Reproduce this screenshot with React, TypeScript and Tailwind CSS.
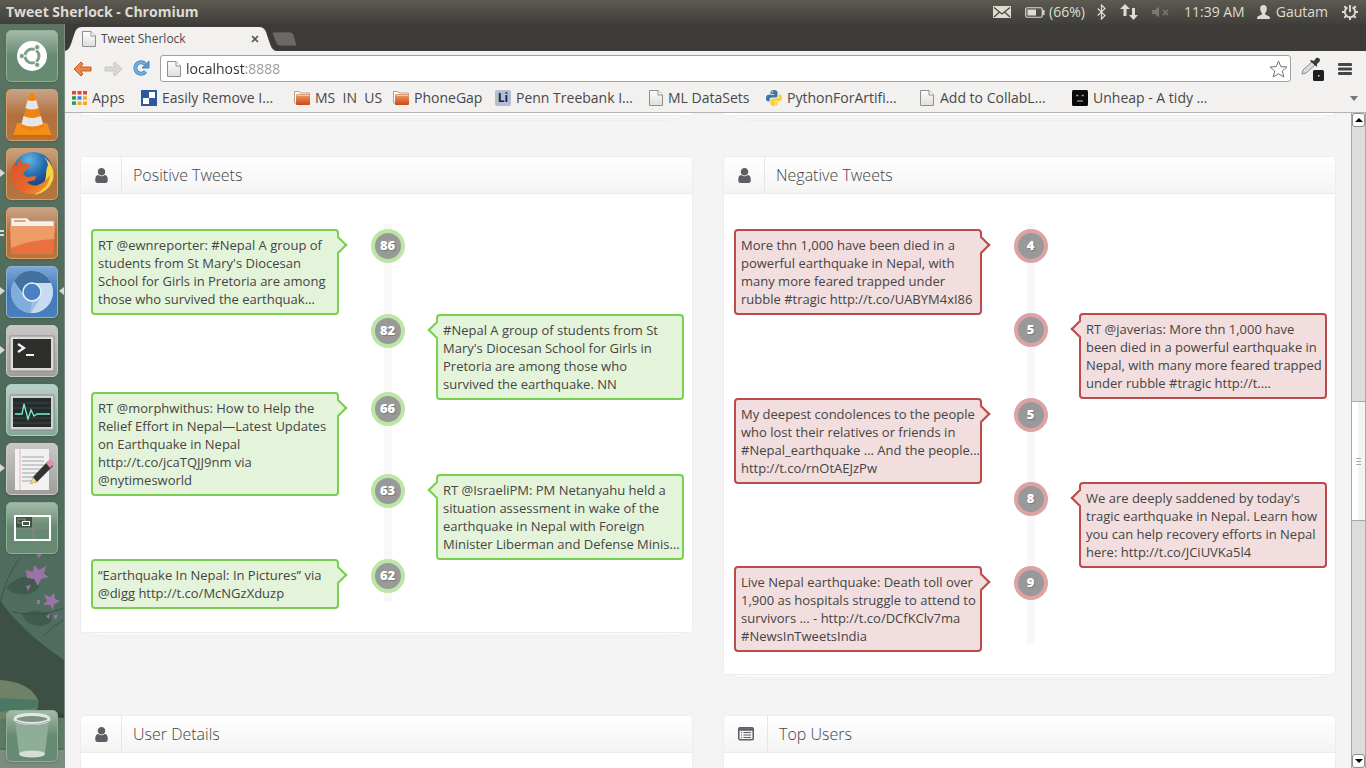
import type { ReactNode } from "react";

const UI = "font-['Open_Sans','Noto_Sans',sans-serif]";

/* ---------- small drawings ---------- */

function PageIcon({ className = "" }: { className?: string }) {
  return (
    <svg className={className} width="14" height="16" viewBox="0 0 14 16">
      <defs>
        <linearGradient id="sheet" x1="0" y1="0" x2="0" y2="1">
          <stop offset="0" stopColor="#fdfdfd" />
          <stop offset="1" stopColor="#dededc" />
        </linearGradient>
      </defs>
      <path d="M.5.5H9L13.500 5V15.500H.5Z" fill="url(#sheet)" stroke="#8f8f8d" />
      <path d="M9 .5V5H13.500" fill="#fff" stroke="#8f8f8d" />
    </svg>
  );
}

function FolderIcon() {
  return (
    <svg width="16" height="16" viewBox="0 0 16 16">
      <defs>
        <linearGradient id="fold" x1="0" y1="0" x2="0" y2="1">
          <stop offset="0" stopColor="#eda06a" />
          <stop offset="1" stopColor="#cf4518" />
        </linearGradient>
      </defs>
      <path d="M.5 13V1.500H5L6 3H15.500V13Z" fill="#fff" stroke="#a8a29c" />
      <rect x="2" y="4" width="14" height="11" rx="1" fill="url(#fold)" />
      <path d="M3 5.500H15" stroke="#f8c7a0" />
    </svg>
  );
}

function UserIcon() {
  return (
    <svg width="13" height="15" viewBox="0 128 1280 1536" fill="#5d5d63">
      <path d="M1280 1399q0 109-62.500 187t-150.500 78h-854q-88 0-150.500-78t-62.500-187q0-85 8.500-160.500t31.500-152 58.500-131 94-89 134.500-34.500q131 128 313 128t313-128q76 0 134.500 34.500t94 89 58.500 131 31.500 152 8.500 160.500zm-256-887q0 159-112.500 271.500t-271.500 112.500-271.500-112.500-112.500-271.500 112.500-271.500 271.500-112.500 271.500 112.500 112.500 271.500z" />
    </svg>
  );
}

function ListIcon() {
  return (
    <svg width="16" height="14" viewBox="0 0 16 14">
      <rect x=".75" y=".75" width="14.500" height="12" rx="1.200" fill="#f4f4f5" stroke="#5d5d63" strokeWidth="1.500" />
      <path d="M1 2.500H15" stroke="#5d5d63" strokeWidth="2.500" />
      <path d="M3 5.500h1M5.500 5.500H13M3 8h1M5.500 8H13M3 10.500h1M5.500 10.500H13" stroke="#5d5d63" strokeWidth="1.200" />
    </svg>
  );
}

/* ---------- desktop menu bar ---------- */

function MenuBar() {
  return (
    <header className={`flex h-6 shrink-0 items-center bg-linear-to-b from-[#5c5a51] to-[#403f3a] pr-2 pl-1.5 text-sm text-[#dfdbd2] ${UI}`}>
      <h1 className="font-bold">Tweet Sherlock - Chromium</h1>
      <div className="ml-auto flex items-center">
        <svg width="18" height="12" viewBox="0 0 18 12" aria-label="Mail">
          <rect width="18" height="12" fill="#dfdbd2" />
          <path d="M1 1.500 9 8 17 1.500M1 11 6.500 6M17 11 11.500 6" fill="none" stroke="#4a4841" strokeWidth="1.300" />
        </svg>
        <svg className="ml-3.5" width="20" height="11" viewBox="0 0 20 11">
          <rect x=".75" y=".75" width="16.500" height="9.500" rx="1.500" fill="none" stroke="#dfdbd2" strokeWidth="1.200" />
          <rect x="2.500" y="2.500" width="8.500" height="6" fill="#dfdbd2" />
          <path d="M18.800 3v5" stroke="#dfdbd2" strokeWidth="1.500" />
        </svg>
        <span className="ml-1">(66%)</span>
        <svg className="ml-3" width="9" height="16" viewBox="0 0 9 16" fill="none" stroke="#dfdbd2" strokeWidth="1.200">
          <path d="M.7 4.500 8 11.500 4.500 15V1L8 4.500.7 11.500" />
        </svg>
        <svg className="ml-3.5" width="18" height="16" viewBox="0 0 18 16" fill="#dfdbd2">
          <path d="M5 0 10 5H6.500V12H3.500V5H0ZM12 4h3v7h3l-4.500 5L9 11h3Z" />
        </svg>
        <svg className="ml-3.5" width="18" height="12" viewBox="0 0 18 12">
          <path d="M0 4H3L7 .5V11.500L3 8H0Z" fill="#7b796f" />
          <path d="M11 4 16 9M16 4 11 9" stroke="#7b796f" strokeWidth="1.600" />
        </svg>
        <time className="ml-3.5">11:39 AM</time>
        <svg className="ml-3" width="13" height="14" viewBox="0 0 13 14" fill="#dfdbd2">
          <path d="M6.500 0C9 0 10 1.700 9.800 4 9.600 6 9 7 8.200 8v1.500L12 11.200Q13 11.800 13 14H0Q0 11.800 1 11.200L4.800 9.500V8C4 7 3.400 6 3.200 4 3 1.700 4 0 6.500 0Z" />
        </svg>
        <span className="ml-1.5">Gautam</span>
        <svg className="ml-3.5" width="16" height="16" viewBox="0 0 16 16" fill="none" stroke="#dfdbd2">
          <path d="M5.500 3.400a5.200 5.200 0 1 0 5 0" strokeWidth="1.900" />
          <path d="M8 1V8" strokeWidth="1.900" />
          <path d="M2.300 2.300 4 4M13.700 2.300 12 4M0 8H3M13 8H16M2.300 13.700 4 12M13.700 13.700 12 12M8 13v3" strokeWidth="2" />
        </svg>
      </div>
    </header>
  );
}

/* ---------- launcher ---------- */

function Tile({ label, tone, running = 0, focused = false, children }: { label: string; tone: string; running?: number; focused?: boolean; children: ReactNode }) {
  return (
    <button aria-label={label} className={`relative ml-1.5 size-[52px] shrink-0 rounded-[5px] border shadow-sm ${tone}`}>
      <svg className="size-full" viewBox="0 0 50 50">
        {children}
      </svg>
      {running === 1 && <span className="absolute top-5 -left-[7px] border-y-4 border-l-5 border-y-transparent border-l-[#d5d8d5]" />}
      {running === 2 && <span className="absolute top-[22px] -left-[7px] h-[6px] w-1 border-y-2 border-[#d5d8d5]" />}
      {focused && <span className="absolute top-5 -right-[7px] border-y-4 border-r-5 border-y-transparent border-r-[#d5d8d5]" />}
    </button>
  );
}

const ORANGE = "border-[#dd9c65] bg-linear-to-b from-[#c9a386] via-[#b1713c] to-[#b7743f]";
const GREY = "border-[#c9c9c7] bg-linear-to-b from-[#c9c8c7] to-[#a09e9c]";
const GREEN = "border-[#8db096] bg-linear-to-b from-[#a4baa9] via-[#668a71] to-[#668971]";

function Launcher() {
  return (
    <nav aria-label="Launcher" className="relative flex w-[65px] shrink-0 flex-col gap-[7px] overflow-hidden border-r border-[#7c8b7e] bg-linear-to-b from-[#5c7461] via-[#4f6a5b] to-[#4f7062] pt-1.5 pb-1.5">
      <svg className="absolute bottom-0 left-0" width="64" height="220" viewBox="0 0 64 220">
        <path d="M0 52Q20 82 64 112V178H0Z" fill="#3d5045" />
        <path d="M0 132Q30 134 38 152 40 164 28 168L0 172Z" fill="#6f8267" />
        <path d="M0 150 37 152 38 160 0 164Z" fill="#4d7765" />
        <path d="M0 172 34 164 64 168V200H0Z" fill="#5d7a66" />
        <path d="M36 162 64 166V170L40 168Z" fill="#34443a" />
        <path d="M6 40Q20 24 38 30 44 40 30 46 14 48 6 40ZM22 66Q34 60 50 66 56 74 42 78 26 78 22 66Z" fill="#405a4c" />
        <path d="M0 55Q6 28 20 10M64 60Q40 70 12 64M44 88Q52 78 64 72" fill="none" stroke="#3c5347" strokeWidth="1" />
        <path d="M26 22 33 24 34 17 39 22 46 18 44 26 49 29 41 31 38 38 34 31 27 30ZM26 38l5-1-3 6ZM44 46l6 3 4-4 1 6 5 2-6 3-1 6-3-5-7 0 4-4ZM37 52h3v4h-3ZM46 68l4-2-1 5Zm7 0 5-2-2 6ZM36 6l6 0-3 4Z" fill="#9a72a6" />
        <path d="M0 202H64V220H0Z" fill="#7c8c80" />
      </svg>
      <Tile label="Dash home" tone={GREEN}>
        <circle cx="25" cy="25" r="15" fill="#fff" />
        <circle cx="25" cy="25" r="7" fill="none" stroke="#7f9f88" strokeWidth="3" />
        <path d="M25 25 34 25M25 25 20 16.500M25 25 20 33.500" stroke="#fff" strokeWidth="1.300" transform="rotate(60 25 25)" />
        <circle cx="14.800" cy="25" r="2.600" fill="#7f9f88" stroke="#fff" strokeWidth=".8" />
        <circle cx="30.200" cy="16.200" r="2.600" fill="#7f9f88" stroke="#fff" strokeWidth=".8" />
        <circle cx="30.200" cy="33.800" r="2.600" fill="#7f9f88" stroke="#fff" strokeWidth=".8" />
      </Tile>
      <Tile label="VLC media player" tone={ORANGE}>
        <path d="M10 33H40L45 46H6Z" fill="#f58d1b" />
        <path d="M6 45H45V47H6Z" fill="#c96b0c" />
        <path d="M22.500 4Q25 2 27.500 4L37 37Q25 44 14 37Z" fill="#f28313" />
        <path d="M20.800 10Q25 12 29.200 10L31.500 18Q25 21 18.400 18ZM16.500 26Q25 30 33.800 26L36 34Q25 39 14.500 34Z" fill="#e4e6e8" />
      </Tile>
      <Tile label="Firefox" tone={ORANGE} running={1}>
        <defs>
          <radialGradient id="globe" cx=".4" cy=".2" r=".8">
            <stop offset="0" stopColor="#63b5e0" />
            <stop offset=".5" stopColor="#256aae" />
            <stop offset="1" stopColor="#10305f" />
          </radialGradient>
          <linearGradient id="fox" x1="0" y1="0" x2="1" y2="1">
            <stop offset="0" stopColor="#d9542a" />
            <stop offset=".6" stopColor="#e8662b" />
            <stop offset="1" stopColor="#f4a52e" />
          </linearGradient>
        </defs>
        <circle cx="26" cy="23" r="20" fill="url(#globe)" />
        <path d="M37 8Q49 17 46 31 41 44 27 46 38 38 39 27 39 20 41 16Q40 11 37 8Z" fill="#f7d443" />
        <path d="M43 26Q42 36 35 41 28 47 18 44 6 40 4 28 3 19 7 14L9 17Q11 13 14 10V14L21 15 24 18 19 20 16 25 20 28 29 27 28 31 20 33Q26 39 33 35 38 33 43 26Z" fill="url(#fox)" />
      </Tile>
      <Tile label="Files" tone={ORANGE} running={2}>
        <path d="M4 22V10H20L23 13H47V22Z" fill="#f4f2ef" stroke="#b8a595" strokeWidth=".7" />
        <path d="M7 12H18L19 14H7Z" fill="#e9a06f" />
        <path d="M3 18H48L46 46H4Z" fill="#e8713f" />
        <path d="M3 18H48L47 31Q22 32 4 40Z" fill="#ee9c68" />
      </Tile>
      <Tile label="Chromium" tone="border-[#8bb4dc] bg-linear-to-b from-[#7ca7d6] via-[#4279b8] to-[#4a80bc]" running={1} focused>
        <circle cx="25" cy="25" r="21" fill="#9bbfe5" />
        <path d="M25 25H46A21 21 0 0 1 24 46L34 30Z" fill="#c7dcf1" />
        <path d="M25 16H44A21 21 0 0 1 46 25H30Z" fill="#c7dcf1" />
        <path d="M7 14A21 21 0 0 1 44 16H25L16 27Z" fill="#43709f" />
        <path d="M7 14 16 30 25 35 23 46A21 21 0 0 1 7 14Z" fill="#80addb" />
        <circle cx="25" cy="25" r="9" fill="#4a80c3" stroke="#e9f1fa" strokeWidth="1.500" />
      </Tile>
      <Tile label="Terminal" tone={GREY} running={1}>
        <rect x="3" y="10" width="44" height="35" rx="1" fill="#dcdbd9" stroke="#8d8c8a" />
        <rect x="6" y="13" width="38" height="29" fill="#2e2e2d" />
        <path d="M11 18 17 22 11 26M19 29H27" fill="none" stroke="#f4f4f4" strokeWidth="2.200" />
      </Tile>
      <Tile label="System Monitor" tone="border-[#a9cfc2] bg-linear-to-b from-[#b9d0c8] to-[#84a89a]">
        <rect x="3" y="10" width="44" height="35" rx="1" fill="#cfd4d1" stroke="#7f8a86" />
        <rect x="6" y="13" width="38" height="29" fill="#252b2b" />
        <path d="M6 18H44M6 23H44M6 33H44M6 38H44" stroke="#3d4646" />
        <path d="M8 29H15L17 19 21 34 24 25 27 31 30 29H43" fill="none" stroke="#7bf0cf" strokeWidth="1.300" />
      </Tile>
      <Tile label="Text Editor" tone={GREY} running={1}>
        <rect x="8" y="5" width="34" height="41" fill="#f1f1f2" />
        <path d="M13 5V46" stroke="#efb0b0" />
        <path d="M15 13H37M15 17H37M15 21H37M15 25H36M15 29H33M15 33H30M15 37H27" stroke="#a3a3a5" />
        <path d="M23 40 26 33 41 17 46 22 30 38Z" fill="#333" />
        <path d="M23 40 26 33 30 38Z" fill="#ecd983" />
        <path d="M39 19 43 15 47 19 43 24Z" fill="#e28fb4" />
      </Tile>
      <Tile label="Workspace Switcher" tone={GREEN}>
        <rect x="7" y="13" width="18" height="12" fill="#3f5145" />
        <path d="M26 13V37M8 25H43" stroke="#94808f" />
        <rect x="11" y="16" width="7" height="4" fill="none" stroke="#8a938c" />
        <rect x="15.500" y="18.500" width="7" height="4" fill="#45584a" stroke="#fff" />
        <rect x="8" y="13" width="35" height="24" fill="none" stroke="#fff" strokeWidth="2" />
      </Tile>
      <div className="mt-auto flex">
        <Tile label="Trash" tone={GREEN}>
          <path d="M8 8H42L38 43Q25 49 12 43Z" fill="#8fae99" />
          <ellipse cx="25" cy="43" rx="13" ry="3.500" fill="#d7dcd8" />
          <ellipse cx="25" cy="8" rx="17" ry="4.500" fill="#7b9383" stroke="#e6e8e6" strokeWidth="3" />
          <path d="M8 10Q25 17 42 10" fill="none" stroke="#a9aeaa" />
        </Tile>
      </div>
    </nav>
  );
}

/* ---------- browser chrome ---------- */

function TabStrip() {
  return (
    <div className="flex h-[27px] shrink-0 items-end bg-[#3c3b37]">
      <div className="relative flex h-6 w-[211px] items-center text-xs text-[#4a4a4a]">
        <svg className="absolute inset-0 size-full" viewBox="0 0 211 24" preserveAspectRatio="none">
          <path d="M0 24Q4 23 6 17L10 5Q12 0 17 0H194Q199 0 201 5L205 17Q207 23 211 24Z" fill="#f2f1f0" />
        </svg>
        <PageIcon className="relative ml-[17px]" />
        <span className="relative ml-[5px]">Tweet Sherlock</span>
        <button aria-label="Close tab" className="relative mr-[17px] ml-auto">
          <svg width="8" height="8" viewBox="0 0 8 8">
            <path d="M1 1 7 7M7 1 1 7" stroke="#555" strokeWidth="1.600" />
          </svg>
        </button>
      </div>
      <button aria-label="New tab" className="mb-[5px] -ml-1">
        <svg width="26" height="14" viewBox="0 0 26 14">
          <path d="M2 0H18Q21 0 22 3L25 14H8Q5 14 4 11L0 1Z" fill="#6a6965" stroke="#33322f" strokeWidth=".6" />
        </svg>
      </button>
    </div>
  );
}

function Toolbar() {
  return (
    <div className="flex h-[35px] shrink-0 items-center bg-[#f2f1f0] pr-3.5 pl-2">
      <button aria-label="Back">
        <svg width="20" height="16" viewBox="0 0 20 16">
          <path d="M1 8 8 1 10 3 7.500 6H18V10H7.500L10 13 8 15Z" fill="#ea8647" stroke="#c65f22" strokeLinejoin="round" />
        </svg>
      </button>
      <button aria-label="Forward" className="ml-2.5">
        <svg width="20" height="16" viewBox="0 0 20 16">
          <path d="M19 8 12 1 10 3 12.500 6H2V10H12.500L10 13 12 15Z" fill="#d9d8d6" stroke="#c9c8c6" strokeLinejoin="round" />
        </svg>
      </button>
      <button aria-label="Reload" className="ml-2.5">
        <svg width="17" height="17" viewBox="0 0 17 17">
          <path d="M12.500 11.500A5.700 5.700 0 1 1 12 4" fill="none" stroke="#4585c4" strokeWidth="4" />
          <path d="M12.500 11.500A5.700 5.700 0 1 1 12 4" fill="none" stroke="#77abdf" strokeWidth="2.400" />
          <path d="M16 1V8H9Z" fill="#5f99d3" stroke="#4585c4" strokeLinejoin="round" />
        </svg>
      </button>
      <div className="ml-2.5 flex h-[27px] flex-1 items-center rounded-[3px] border border-[#a3a19d] bg-white pr-0.5 pl-[6px]">
        <PageIcon className="shrink-0" />
        <input
          aria-label="Address"
          defaultValue="localhost:8888"
          className="ml-[5px] min-w-0 flex-1 bg-linear-to-r from-[#2f2f2f] from-[60px] to-[#959595] to-[60px] bg-clip-text text-sm text-transparent caret-black outline-none"
        />
        <button aria-label="Bookmark this page">
          <svg width="19" height="18" viewBox="0 0 19 18">
            <path d="M9.500 1 11.800 6.600 18 7 13.300 11 14.800 17 9.500 13.800 4.200 17 5.700 11 1 7 7.200 6.600Z" fill="#fff" stroke="#74726e" strokeLinejoin="round" />
          </svg>
        </button>
      </div>
      <button aria-label="Color picker" className="ml-2.5">
        <svg width="23" height="24" viewBox="0 0 23 24">
          <path d="M1 17 2 13 11 5 14 8 5 16Z" fill="#dcdcdc" stroke="#8a8a8a" />
          <path d="M10 3 13 4 15 1Q19 0 19 4L16 7 16 10 9 4Z" fill="#3a3b3d" />
          <rect x="12" y="13" width="11" height="11" rx="1.500" fill="#1e1f21" />
          <rect x="17" y="18" width="1.500" height="1.500" fill="#ddd" />
        </svg>
      </button>
      <button aria-label="Menu" className="ml-3.5">
        <svg width="14" height="14" viewBox="0 0 14 14">
          <path d="M1 2.500H13M1 7H13M1 11.500H13" stroke="#454545" strokeWidth="2.800" strokeLinecap="round" />
        </svg>
      </button>
    </div>
  );
}

function Bookmark({ width, icon, children }: { width: string; icon: ReactNode; children: ReactNode }) {
  return (
    <a href="#bookmark" className={`flex shrink-0 items-center gap-[5px] whitespace-nowrap ${width}`}>
      {icon}
      <span>{children}</span>
    </a>
  );
}

function BookmarkBar() {
  return (
    <nav aria-label="Bookmarks" className="flex h-[27px] shrink-0 items-center border-b border-[#b5b3b0] bg-[#f2f1f0] pr-2 pb-0.5 pl-[7px] text-sm text-[#484848]">
      <Bookmark
        width="w-[69px]"
        icon={
          <svg width="15" height="14" viewBox="0 0 15 14">
            <path d="M0 0h4v3.500H0zM5.500 0h4v3.500h-4zM11 0h4v3.500h-4z" fill="#ea4335" />
            <path d="M0 5.200h4v3.500H0z" fill="#2c9b51" />
            <path d="M5.500 5.200h4v3.500h-4z" fill="#3a7fe8" />
            <path d="M11 5.200h4v3.500h-4zM5.500 10.400h4v3.500h-4zM11 10.400h4v3.500h-4z" fill="#f2ab1b" />
            <path d="M0 10.400h4v3.500H0z" fill="#2c9b51" />
          </svg>
        }
      >
        Apps
      </Bookmark>
      <Bookmark
        width="w-[153px]"
        icon={
          <svg width="16" height="16" viewBox="0 0 16 16">
            <rect width="16" height="16" fill="#2f56a0" />
            <path d="M8 2H14V8H8ZM2 8H8V14H2Z" fill="#fff" />
          </svg>
        }
      >
        Easily Remove I…
      </Bookmark>
      <Bookmark width="w-[99px]" icon={<FolderIcon />}>
        MS&nbsp; IN&nbsp; US
      </Bookmark>
      <Bookmark width="w-[102px]" icon={<FolderIcon />}>
        PhoneGap
      </Bookmark>
      <Bookmark width="w-[154px]" icon={<span className="flex size-4 items-center justify-center rounded-xs bg-[#b3bdd4] text-xs font-bold text-[#1e2433]">Li</span>}>
        Penn Treebank I…
      </Bookmark>
      <Bookmark width="w-[117px]" icon={<PageIcon />}>
        ML DataSets
      </Bookmark>
      <Bookmark
        width="w-[153px]"
        icon={
          <svg width="16" height="16" viewBox="0 0 16 16">
            <path d="M8 0C5 0 4.500 1 4.500 2.300V4H8.200V4.700H2.500C1 4.700 0 6 0 8.200S1 11.500 2.200 11.500H3.500V9.800C3.500 8.500 4.500 7.600 5.800 7.600H9.500C10.700 7.600 11.500 6.800 11.500 5.700V2.300C11.500 1 10.500 0 8 0Z" fill="#3b76a8" />
            <path d="M8 16C11 16 11.500 15 11.500 13.700V12H7.800V11.300H13.500C15 11.300 16 10 16 7.800S15 4.500 13.800 4.500H12.500V6.200C12.500 7.500 11.500 8.400 10.200 8.400H6.500C5.300 8.400 4.500 9.200 4.500 10.300V13.700C4.500 15 5.500 16 8 16Z" fill="#f7cf3f" />
            <circle cx="6.300" cy="2" r=".7" fill="#fff" />
            <circle cx="9.700" cy="14" r=".7" fill="#fff" />
          </svg>
        }
      >
        PythonForArtifi…
      </Bookmark>
      <Bookmark width="w-[153px]" icon={<PageIcon className="mx-px" />}>
        Add to CollabL…
      </Bookmark>
      <Bookmark
        width="w-[160px]"
        icon={
          <svg width="16" height="16" viewBox="0 0 16 16">
            <rect width="16" height="16" rx="1.500" fill="#0a0a0a" />
            <path d="M4 5.500h2.500M9.500 5.500H12M5 11h6" stroke="#8b8b8b" strokeWidth="1.500" />
          </svg>
        }
      >
        Unheap - A tidy …
      </Bookmark>
      <button aria-label="More bookmarks" className="ml-auto border-x-4 border-t-5 border-x-transparent border-t-[#777]" />
    </nav>
  );
}

/* ---------- page ---------- */

type Tweet = { score: number; text: string; row: string };
type Tone = "positive" | "negative";

const POSITIVE: Tweet[] = [
  { score: 86, row: "h-[85px]", text: "RT @ewnreporter: #Nepal A group of\nstudents from St Mary's Diocesan\nSchool for Girls in Pretoria are among\nthose who survived the earthquak…" },
  { score: 82, row: "h-[78px]", text: "#Nepal A group of students from St\nMary's Diocesan School for Girls in\nPretoria are among those who\nsurvived the earthquake. NN" },
  { score: 66, row: "h-[82px]", text: "RT @morphwithus: How to Help the\nRelief Effort in Nepal—Latest Updates\non Earthquake in Nepal\nhttp://t.co/jcaTQJJ9nm via\n@nytimesworld" },
  { score: 63, row: "h-[85px]", text: "RT @IsraeliPM: PM Netanyahu held a\nsituation assessment in wake of the\nearthquake in Nepal with Foreign\nMinister Liberman and Defense Minis…" },
  { score: 62, row: "h-[43px]", text: "“Earthquake In Nepal: In Pictures” via\n@digg http://t.co/McNGzXduzp" },
];

const NEGATIVE: Tweet[] = [
  { score: 4, row: "h-[84px]", text: "More thn 1,000 have been died in a\npowerful earthquake in Nepal, with\nmany more feared trapped under\nrubble #tragic http://t.co/UABYM4xI86" },
  { score: 5, row: "h-[85px]", text: "RT @javerias: More thn 1,000 have\nbeen died in a powerful earthquake in\nNepal, with many more feared trapped\nunder rubble #tragic http://t.…" },
  { score: 5, row: "h-[84px]", text: "My deepest condolences to the people\nwho lost their relatives or friends in\n#Nepal_earthquake ... And the people...\nhttp://t.co/rnOtAEJzPw" },
  { score: 8, row: "h-[84px]", text: "We are deeply saddened by today's\ntragic earthquake in Nepal. Learn how\nyou can help recovery efforts in Nepal\nhere: http://t.co/JCiUVKa5l4" },
  { score: 9, row: "h-[78px]", text: "Live Nepal earthquake: Death toll over\n1,900 as hospitals struggle to attend to\nsurvivors ... - http://t.co/DCfKClv7ma\n#NewsInTweetsIndia" },
];

const BUBBLE: Record<Tone, string> = {
  positive: "border-[#79cf50] bg-[#e4f4da]",
  negative: "border-[#bb4a4a] bg-[#f2dede]",
};
const RING: Record<Tone, string> = {
  positive: "border-[#bce6a6]",
  negative: "border-[#dda3a3]",
};

function Bubble({ tone, side, text }: { tone: Tone; side: "left" | "right"; text: string }) {
  const place = side === "left" ? "-right-2 border-t-2 border-r-2" : "-left-2 border-b-2 border-l-2";
  return (
    <p className={`relative row-start-1 self-start rounded-[4px] border-2 py-[5px] pl-[5px] text-[13px] leading-[18px] whitespace-pre text-[#444] ${side === "left" ? "col-start-1" : "col-start-3"} ${BUBBLE[tone]}`}>
      <span className={`absolute top-2 size-3 rotate-45 ${place} ${BUBBLE[tone]}`} />
      <span className="relative">{text}</span>
    </p>
  );
}

function Timeline({ tone, tweets }: { tone: Tone; tweets: Tweet[] }) {
  return (
    <ol className="relative mt-[30px] mr-2 mb-[30px] ml-[10px] pt-[5px]">
      <li aria-hidden="true" className="absolute inset-y-0 left-1/2 -ml-1 w-2 bg-[#f8f8f8]" />
      {tweets.map((tweet, i) => (
        <li key={i} className={`relative grid grid-cols-[minmax(0,248fr)_minmax(0,97fr)_minmax(0,248fr)] ${tweet.row}`}>
          <Bubble tone={tone} side={i % 2 ? "right" : "left"} text={tweet.text} />
          <span className={`col-start-2 row-start-1 flex size-[34px] items-center justify-center justify-self-center rounded-full border-4 bg-[#999] text-[13px] font-extrabold text-white [text-shadow:1px_1px_1px_#777] ${RING[tone]}`}>
            {tweet.score}
          </span>
        </li>
      ))}
    </ol>
  );
}

function Sheets() {
  return (
    <>
      <div className="mx-3 h-[3px] rounded-b-xs border border-t-0 border-[#ededed] bg-[#fafafa]" />
      <div className="mx-6 h-0.5 rounded-b-xs border border-t-0 border-[#ededed] bg-[#f8f8f8]" />
    </>
  );
}

function Panel({ title, icon, children }: { title: string; icon: ReactNode; children?: ReactNode }) {
  return (
    <section className="mb-[35px]">
      <div className="min-h-20 rounded-[4px] border border-[#ededed] bg-white">
        <header className="flex h-[37px] items-stretch rounded-t-[4px] border-b border-[#ebebeb] bg-linear-to-b from-white to-[#f4f4f4]">
          <span className="flex items-center border-r border-[#e6e6e6] pr-[13px] pl-3.5">{icon}</span>
          <h2 className="flex items-center px-[11px] text-base font-light text-[#444]">{title}</h2>
        </header>
        {children}
      </div>
      <Sheets />
    </section>
  );
}

function PanelEnd() {
  return (
    <div className="mb-[35px]">
      <div className="h-[3px] rounded-b-[4px] border border-t-0 border-[#ededed] bg-white" />
      <Sheets />
    </div>
  );
}

function Scrollbar() {
  const arrow = "flex h-[14px] shrink-0 items-center justify-center rounded-[3px] border border-[#8f8f8c] bg-white";
  return (
    <div className="flex w-[15px] shrink-0 flex-col border-x border-[#a9a8a4] bg-[#dddcda]">
      <button aria-label="Scroll up" className={arrow}>
        <span className="border-x-4 border-b-4 border-x-transparent border-b-black" />
      </button>
      <div className="grow-[274] basis-0" />
      <div className="flex grow-[118] basis-0 flex-col items-center justify-center gap-0.5 border-y border-[#a9a8a4] bg-linear-to-r from-white from-50% to-[#f3f3f2] to-50%">
        <span className="h-px w-[5px] bg-[#aaa]" />
        <span className="h-px w-[5px] bg-[#aaa]" />
        <span className="h-px w-[5px] bg-[#aaa]" />
      </div>
      <div className="grow-[233] basis-0" />
      <button aria-label="Scroll down" className={arrow}>
        <span className="border-x-4 border-t-4 border-x-transparent border-t-black" />
      </button>
    </div>
  );
}

export default function App() {
  return (
    <div className="flex h-screen flex-col overflow-hidden">
      <MenuBar />
      <div className="flex min-h-0 flex-1">
        <Launcher />
        <div className={`flex min-w-0 flex-1 flex-col ${UI}`}>
          <TabStrip />
          <Toolbar />
          <BookmarkBar />
          <div className="flex min-h-0 flex-1">
            <main className="grid min-w-0 flex-1 grid-cols-2 content-start gap-x-[30px] overflow-hidden bg-[#f4f4f4] px-[15px]">
              <PanelEnd />
              <PanelEnd />
              <Panel title="Positive Tweets" icon={<UserIcon />}>
                <Timeline tone="positive" tweets={POSITIVE} />
              </Panel>
              <Panel title="Negative Tweets" icon={<UserIcon />}>
                <Timeline tone="negative" tweets={NEGATIVE} />
              </Panel>
              <Panel title="User Details" icon={<UserIcon />} />
              <Panel title="Top Users" icon={<ListIcon />} />
            </main>
            <Scrollbar />
          </div>
        </div>
      </div>
    </div>
  );
}
